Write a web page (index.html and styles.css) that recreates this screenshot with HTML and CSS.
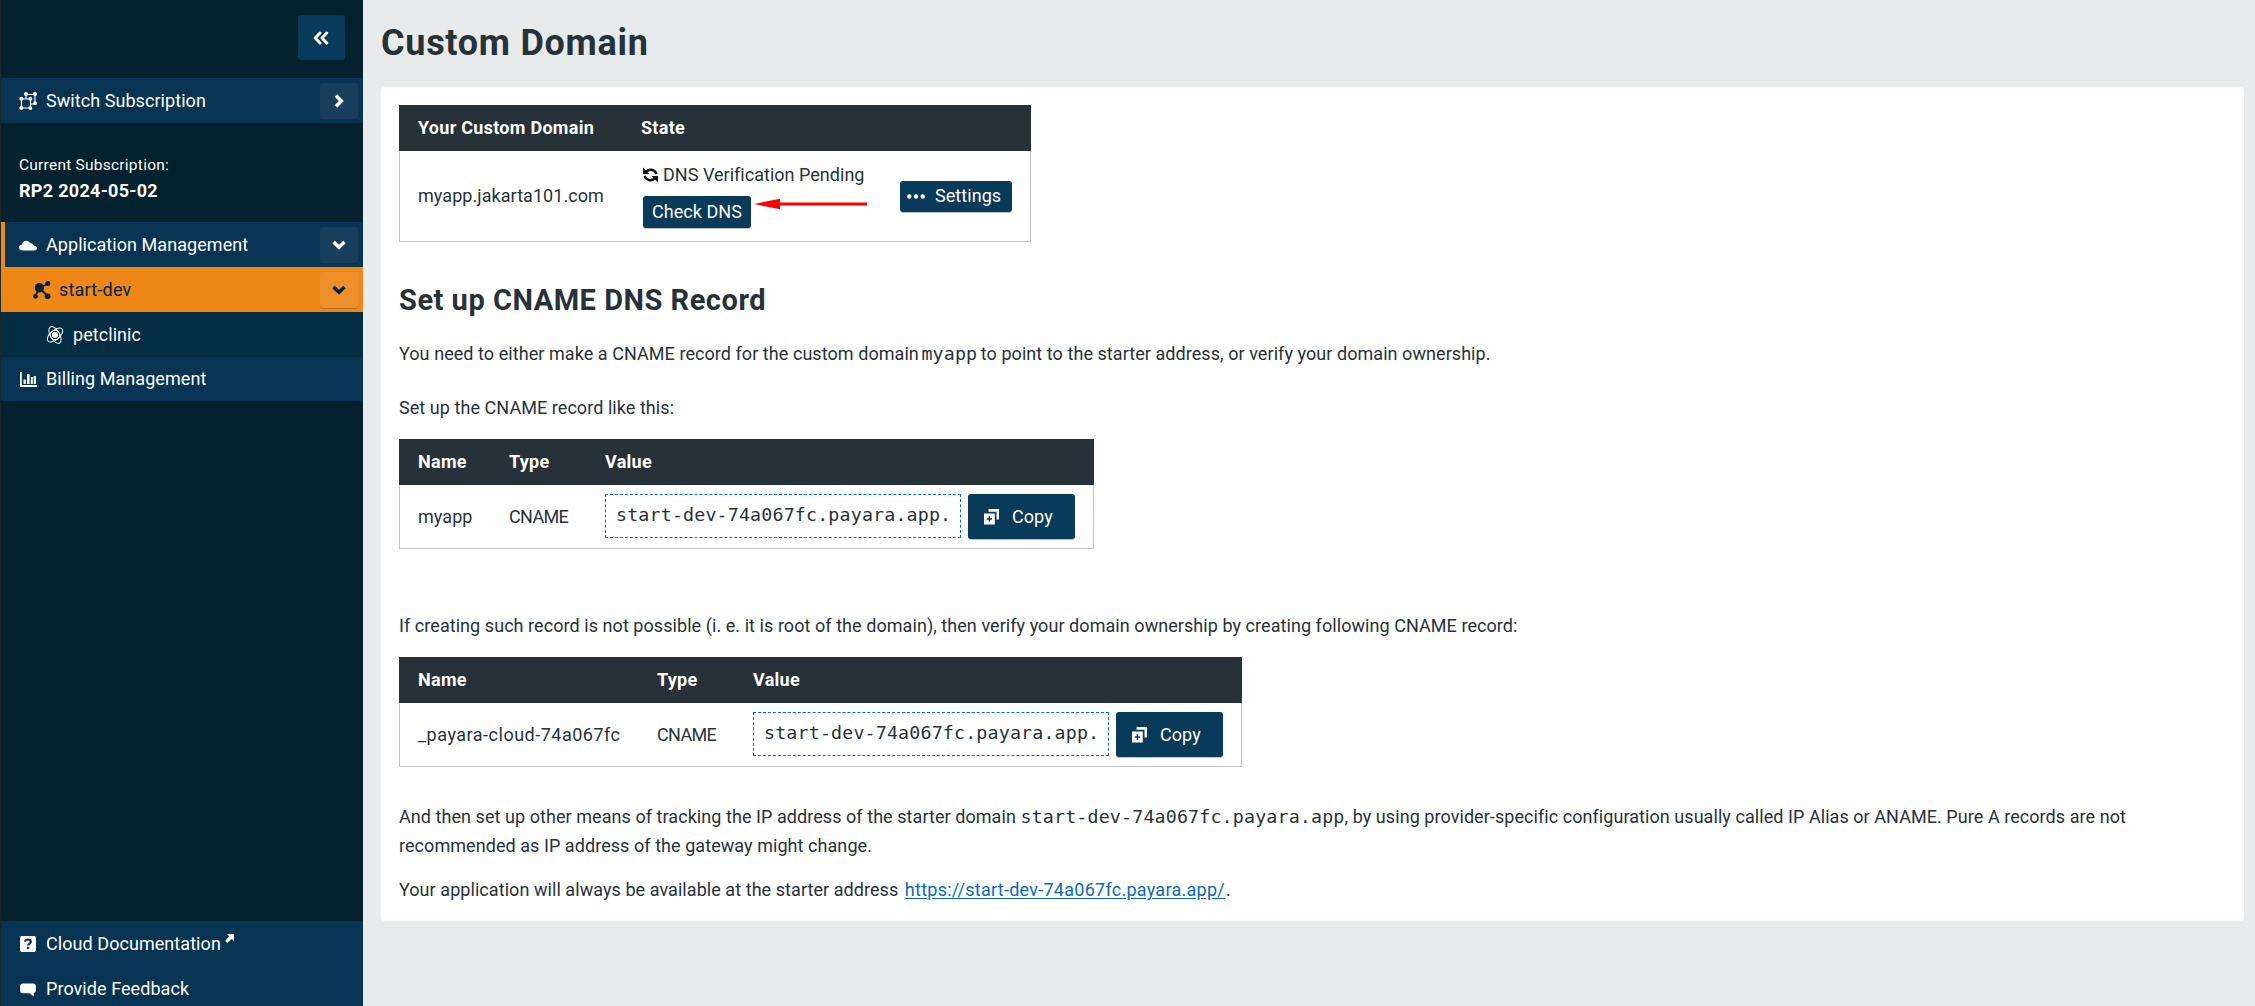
FILE: index.html
```html
<!DOCTYPE html>
<html lang="en">
<head>
<meta charset="utf-8">
<title>Custom Domain</title>
<link rel="stylesheet" href="styles.css">
</head>
<body>
<div class="app">
  <aside class="sidebar">
    <div class="sidebar-top">
      <button class="collapse" aria-label="Collapse menu">
        <svg width="16" height="14" viewBox="0 0 16 14" fill="none" stroke="#fff" stroke-width="3" stroke-linecap="round" stroke-linejoin="round"><path d="M7 2 2.200 7 7 12M13.800 2 9 7l4.800 5"/></svg>
      </button>
    </div>
    <a class="item">
      <svg class="icon" viewBox="0 0 18 18" fill="#fff" stroke="#fff"><path d="M2.500 7h9v9h-9zM7 7V2.500h9V12h-4.500" fill="none" stroke-width="1.200"/><g stroke="none"><circle cx="2.300" cy="6.800" r="2"/><circle cx="11.400" cy="6.800" r="2"/><circle cx="2.300" cy="15.900" r="2"/><circle cx="11.400" cy="15.900" r="2"/><circle cx="7" cy="2" r="2"/><circle cx="16" cy="2" r="2"/><circle cx="16" cy="11.300" r="2"/></g></svg>
      <span>Switch Subscription</span>
      <i class="toggle"><svg width="10" height="14" viewBox="0 0 10 14" fill="none" stroke="#fff" stroke-width="3.600"><path d="M2 1.500 7.300 7 2 12.500"/></svg></i>
    </a>
    <div class="current">
      <div class="current-label">Current Subscription:</div>
      <div class="current-name">RP2 2024-05-02</div>
    </div>
    <nav>
      <a class="item open">
        <svg class="icon" viewBox="0 0 18 18" fill="#fff"><path d="M3.500 14.500C1.500 14.500 0 13.200 0 11.500S1.300 8.800 3 8.600C3.200 6.300 5 4.700 7.200 4.700c1.800 0 3.300.9 4 2.500 1.700-.3 3.200.7 3.500 2.300 2 0 3.300 1 3.300 2.600s-1.100 2.400-2.600 2.400z"/></svg>
        <span>Application Management</span>
        <i class="toggle"><svg width="14" height="10" viewBox="0 0 14 10" fill="none" stroke="#fff" stroke-width="3.600"><path d="M1.500 2 7 7.300 12.500 2"/></svg></i>
      </a>
      <a class="item active">
        <svg class="icon" viewBox="0 0 18 18" fill="#04212e" stroke="#04212e"><path d="M6.500 7 15 2.500M6.500 7 2.300 15M6.500 7 14.500 15" stroke-width="1.800"/><g stroke="none"><circle cx="6.400" cy="6.800" r="4.700"/><circle cx="14.800" cy="2.500" r="2.500"/><circle cx="2.500" cy="15.300" r="2.400"/><circle cx="14.600" cy="15.200" r="2.800"/></g></svg>
        <span>start-dev</span>
        <i class="toggle"><svg width="14" height="10" viewBox="0 0 14 10" fill="none" stroke="#04212e" stroke-width="3.600"><path d="M1.500 2 7 7.300 12.500 2"/></svg></i>
      </a>
      <a class="item leaf">
        <svg class="icon" viewBox="0 0 18 18" fill="none" stroke="#fff" stroke-width="1"><circle cx="9" cy="9" r="3" fill="#fff" stroke="none"/><circle cx="9" cy="9" r="4.700"/><ellipse cx="9" cy="9" rx="9.300" ry="4.600" transform="rotate(60 9 9)"/><ellipse cx="9" cy="9" rx="9.300" ry="4.600" transform="rotate(-40 9 9)"/></svg>
        <span>petclinic</span>
      </a>
      <a class="item short">
        <svg class="icon" viewBox="0 0 18 18" fill="#fff"><path d="M1 2h1.800v13H18v2H1zM4.500 9.500h2.300V14H4.500zM8 4h2.600v10H8zM11.800 7h2v7h-2zM14.700 6h2.300v8h-2.300z"/></svg>
        <span>Billing Management</span>
      </a>
    </nav>
    <footer class="sidebar-foot">
      <a class="item">
        <svg class="icon" viewBox="0 0 18 18"><rect x="1" y="1" width="16" height="16" rx="1.800" fill="#fff"/><path d="M6.200 6.800C6.200 5.300 7.400 4.500 9 4.500s2.800.8 2.800 2.200c0 1.900-2.700 1.800-2.700 3.900" fill="none" stroke="#083453" stroke-width="2.200"/><path d="M7.900 11.800h2.300V14H7.900z" fill="#083453"/></svg>
        <span>Cloud Documentation</span>
        <svg class="ext" width="9" height="9" viewBox="0 0 9 9"><path d="M1.800 0H9v7.200L6.700 4.900 2.300 9 0 7l4.100-4.500z" fill="#fff"/></svg>
      </a>
      <a class="item">
        <svg class="icon" viewBox="0 0 18 18" fill="#fff"><path d="M4 3.500h10a3 3 0 0 1 3 3v3.700a3 3 0 0 1-2.200 2.900v3.400l-4.300-3.300H4a3 3 0 0 1-3-3V6.500a3 3 0 0 1 3-3z"/></svg>
        <span>Provide Feedback</span>
      </a>
    </footer>
  </aside>

  <main class="main">
    <h1>Custom Domain</h1>
    <section class="card">
      <div class="domain-wrap">
        <table class="domain">
          <thead><tr><th class="c-domain">Your Custom Domain</th><th class="c-state">State</th><th class="c-action"></th></tr></thead>
          <tbody><tr>
            <td>myapp.jakarta101.com</td>
            <td>
              <div class="state">
                <div class="status"><svg width="15" height="16" viewBox="0 0 15 16" fill="none" stroke="#111" stroke-width="2.600"><path d="M3 4.800C6 1.500 11 2 13.500 7M12 11.200C9 14.500 4 14 1.500 9"/><path d="M0 .5v6.500h6.500zM15 15.500V9H8.500z" fill="#111" stroke="none"/></svg><span>DNS Verification Pending</span></div>
                <button class="btn check">Check DNS</button>
              </div>
            </td>
            <td><button class="btn settings"><svg width="18" height="5" viewBox="0 0 18 5" fill="#fff"><circle cx="2.300" cy="2.500" r="2.200"/><circle cx="9" cy="2.500" r="2.200"/><circle cx="15.700" cy="2.500" r="2.200"/></svg>Settings</button></td>
          </tr></tbody>
        </table>
        <svg class="pointer" width="113" height="12" viewBox="0 0 113 12" fill="#f00"><path d="M0 6 26 .7V4.500h87v3H26v3.800z"/></svg>
      </div>

      <h2>Set up CNAME DNS Record</h2>
      <p>You need to either make a CNAME record for the custom domain <code class="host">myapp</code> to point to the starter address, or verify your domain ownership.</p>
      <p class="lead-in">Set up the CNAME record like this:</p>
      <table class="record">
        <thead><tr><th class="c-name">Name</th><th class="c-type">Type</th><th class="c-value">Value</th></tr></thead>
        <tbody><tr><td>myapp</td><td class="type">CNAME</td><td><div class="value"><code class="copy-box">start-dev-74a067fc.payara.app.</code><button class="btn copy"><svg width="15" height="16" viewBox="0 0 15 16"><path d="M4.500 0H15v10.500h-2.500V2.700h-8z" fill="#fff"/><path d="M0 4.500h10.800V15.500H0z" fill="#fff"/><path d="M5.400 7.300v5.400M2.700 10h5.400" stroke="#083a59" stroke-width="1.400"/></svg>Copy</button></div></td></tr></tbody>
      </table>

      <p class="alternative">If creating such record is not possible (i. e. it is root of the domain), then verify your domain ownership by creating following CNAME record:</p>
      <table class="record wide">
        <thead><tr><th class="c-name">Name</th><th class="c-type">Type</th><th class="c-value">Value</th></tr></thead>
        <tbody><tr><td class="token">_payara-cloud-74a067fc</td><td class="type">CNAME</td><td><div class="value"><code class="copy-box">start-dev-74a067fc.payara.app.</code><button class="btn copy"><svg width="15" height="16" viewBox="0 0 15 16"><path d="M4.500 0H15v10.500h-2.500V2.700h-8z" fill="#fff"/><path d="M0 4.500h10.800V15.500H0z" fill="#fff"/><path d="M5.400 7.300v5.400M2.700 10h5.400" stroke="#083a59" stroke-width="1.400"/></svg>Copy</button></div></td></tr></tbody>
      </table>

      <p class="tracking">And then set up other means of tracking the IP address of the starter domain <code>start-dev-74a067fc.payara.app</code>, by using provider-specific configuration usually called IP Alias or ANAME. Pure A records are not recommended as IP address of the gateway might change.</p>
      <p class="starter">Your application will always be available at the starter address <a class="link">https://start-dev-74a067fc.payara.app/</a>.</p>
    </section>
  </main>
</div>
</body>
</html>
```
FILE: styles.css
```css
* { box-sizing: border-box; }
body {
  margin: 0;
  background: #e7ebeb;
  color: #263238;
  font: 18px/28px Roboto, "Open Sans", sans-serif;
  letter-spacing: .06px;
}
button { border: 0; font: inherit; letter-spacing: inherit; color: #fff; padding: 0; }
.app { display: flex; height: 1006px; overflow: hidden; }

.sidebar {
  width: 363px;
  flex: none;
  display: flex;
  flex-direction: column;
  background: #04212e;
  border-left: 1px solid #1d2629;
  color: #fff;
}
.sidebar-top { height: 78px; padding: 15px 18px 0 0; display: flex; justify-content: flex-end; }
.collapse {
  width: 47px; height: 45px;
  border-radius: 3px;
  background: #083a59;
  padding-right: 2px;
  display: flex; align-items: center; justify-content: center;
}
.item {
  display: flex;
  align-items: center;
  height: 45px;
  padding: 0 5px 0 18px;
  background: #083453;
}
.icon { width: 18px; height: 18px; margin-right: 9px; flex: none; overflow: visible; }
.toggle {
  width: 38px; height: 36px;
  margin-left: auto;
  border-radius: 3px;
  background: #173f5c;
  display: flex; align-items: center; justify-content: center;
}
.open { border-left: 4px solid #ed8a19; padding-left: 14px; }
.active { background: #ed8818; color: #04212e; padding-left: 32px; letter-spacing: .2px; }
.active .icon { margin-right: 8px; }
.active .toggle { background: #ed9029; box-shadow: 0 1px 0 #b57120; }
.leaf { background: #042c43; padding-left: 45px; }
.short { height: 44px; }
.current { height: 99px; padding: 31px 0 0 18px; }
.current-label { font-size: 15.500px; line-height: 22px; letter-spacing: .24px; }
.current-name { font-weight: 700; letter-spacing: .3px; line-height: 30px; }
.sidebar-foot { margin-top: auto; height: 85px; background: #083453; }
.ext { margin: -11px 0 0 4px; }

.main { flex: 1; padding: 21px 11px 0 18px; }
h1 { margin: 0 0 22px; font-size: 36px; line-height: 44px; letter-spacing: .72px; }
h2 { margin: 40px 0 22px; font-size: 29px; line-height: 36px; letter-spacing: .52px; }
.card { background: #fff; border-radius: 4px; padding: 18px 18px 17px; }
p { margin: 0; }
.lead-in { margin: 26px 0 17px; }
.alternative { margin: 63px 0 17px; }
.tracking { margin: 35px 80px 16px 0; line-height: 29px; }

table { table-layout: fixed; border-spacing: 0; }
th, td { padding: 0 0 0 19px; text-align: left; vertical-align: middle; }
th { height: 46px; background: #263238; color: #fff; letter-spacing: .28px; }
td { border-bottom: 1px solid #c2c4c6; }
td:first-child { border-left: 1px solid #c2c4c6; padding-left: 18px; }
td:last-child { border-right: 1px solid #c2c4c6; }

.domain-wrap { position: relative; }
.domain { width: 632px; }
.domain td { height: 91px; }
.c-domain { width: 223px; }
.c-state { width: 259px; }
.c-action { width: 150px; }
.state { padding: 0 0 4px 2px; }
.status { display: flex; align-items: center; gap: 5px; height: 28px; margin-bottom: 7px; letter-spacing: .02px; }
.pointer { position: absolute; left: 355px; top: 93px; }

.record { width: 695px; }
.record td { height: 64px; }
.c-name { width: 91px; }
.c-type { width: 96px; }
.c-value { width: 508px; }
.wide { width: 843px; }
.wide .c-name { width: 239px; }
.type { letter-spacing: -.65px; }
.token { letter-spacing: .5px; }
.value { display: flex; gap: 7px; }

.btn { display: flex; align-items: center; background: #083a59; border-radius: 3px; box-shadow: 0 1px 0 #b9c2c8; }
.check { width: 108px; height: 32px; justify-content: center; }
.settings { width: 112px; height: 31px; padding-left: 7px; gap: 10px; }
.copy { width: 107px; height: 45px; padding-left: 16px; gap: 13px; }
code { font-family: "DejaVu Sans Mono", monospace; font-size: 18.300px; line-height: 1; letter-spacing: .17px; }
.host { margin: 0 -1px 0 -2px; }
.copy-box {
  width: 356px; height: 44px;
  border: 1px dashed #0a6abf;
  padding-left: 10px;
  line-height: 39px;
  white-space: nowrap;
}
.link { color: #0a6abf; text-decoration: underline; letter-spacing: .26px; text-underline-offset: 2px; margin: 0 1px 0 2px; }
```
